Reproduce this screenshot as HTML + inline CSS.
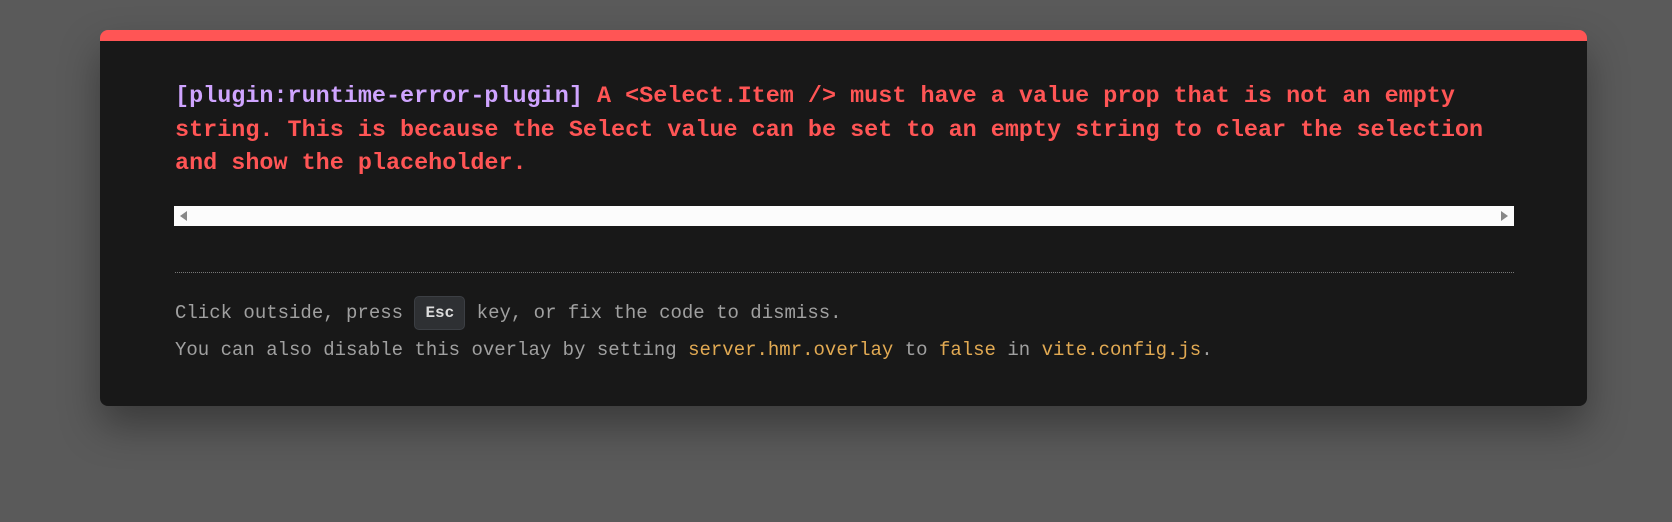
<!DOCTYPE html>
<html><head><style>
html,body{margin:0;padding:0;width:1672px;height:522px;background:#5a5a5a;overflow:hidden}
.card{position:absolute;left:100px;top:30px;width:1487px;height:376px;background:#181818;border-radius:8px;border-top:11px solid #ff5555;box-sizing:border-box;box-shadow:0 20px 40px rgba(0,0,0,.35)}
.msg{position:absolute;left:175px;top:80px;font-family:"Liberation Mono","DejaVu Sans Mono",monospace;font-weight:bold;font-size:23.45px;line-height:33.6px;color:#ff5555;white-space:pre}
.p{color:#cfa4ff}
.sb{position:absolute;left:174px;top:206px;width:1340px;height:20px;background:#fcfcfc}
.sb .l{position:absolute;left:6px;top:5px;width:0;height:0;border-top:5px solid transparent;border-bottom:5px solid transparent;border-right:7px solid #888}
.sb .r{position:absolute;right:6px;top:5px;width:0;height:0;border-top:5px solid transparent;border-bottom:5px solid transparent;border-left:7px solid #888}
.hr{position:absolute;left:175px;top:272px;width:1339px;border-top:1px dotted #777}
.f{position:absolute;left:175px;font-family:"Liberation Mono","DejaVu Sans Mono",monospace;font-size:19px;color:#a0a0a0;white-space:pre}
.y{color:#e2aa53}
.kbd{display:inline-block;background:#2e3033;border:1px solid #3c3f44;border-radius:5px;color:#ddd;font-weight:bold;font-size:16px;line-height:32px;padding:0 10px;vertical-align:middle}
</style></head><body>
<div class="card"></div>
<div class="msg"><span class="p">[plugin:runtime-error-plugin]</span> A &lt;Select.Item /&gt; must have a value prop that is not an empty
string. This is because the Select value can be set to an empty string to clear the selection
and show the placeholder.</div>
<div class="sb"><div class="l"></div><div class="r"></div></div>
<div class="hr"></div>
<div class="f" style="top:296px;line-height:34px">Click outside, press <span class="kbd">Esc</span> key, or fix the code to dismiss.</div>
<div class="f" style="top:337px;line-height:26px">You can also disable this overlay by setting <span class="y">server.hmr.overlay</span> to <span class="y">false</span> in <span class="y">vite.config.js</span>.</div>
</body></html>
